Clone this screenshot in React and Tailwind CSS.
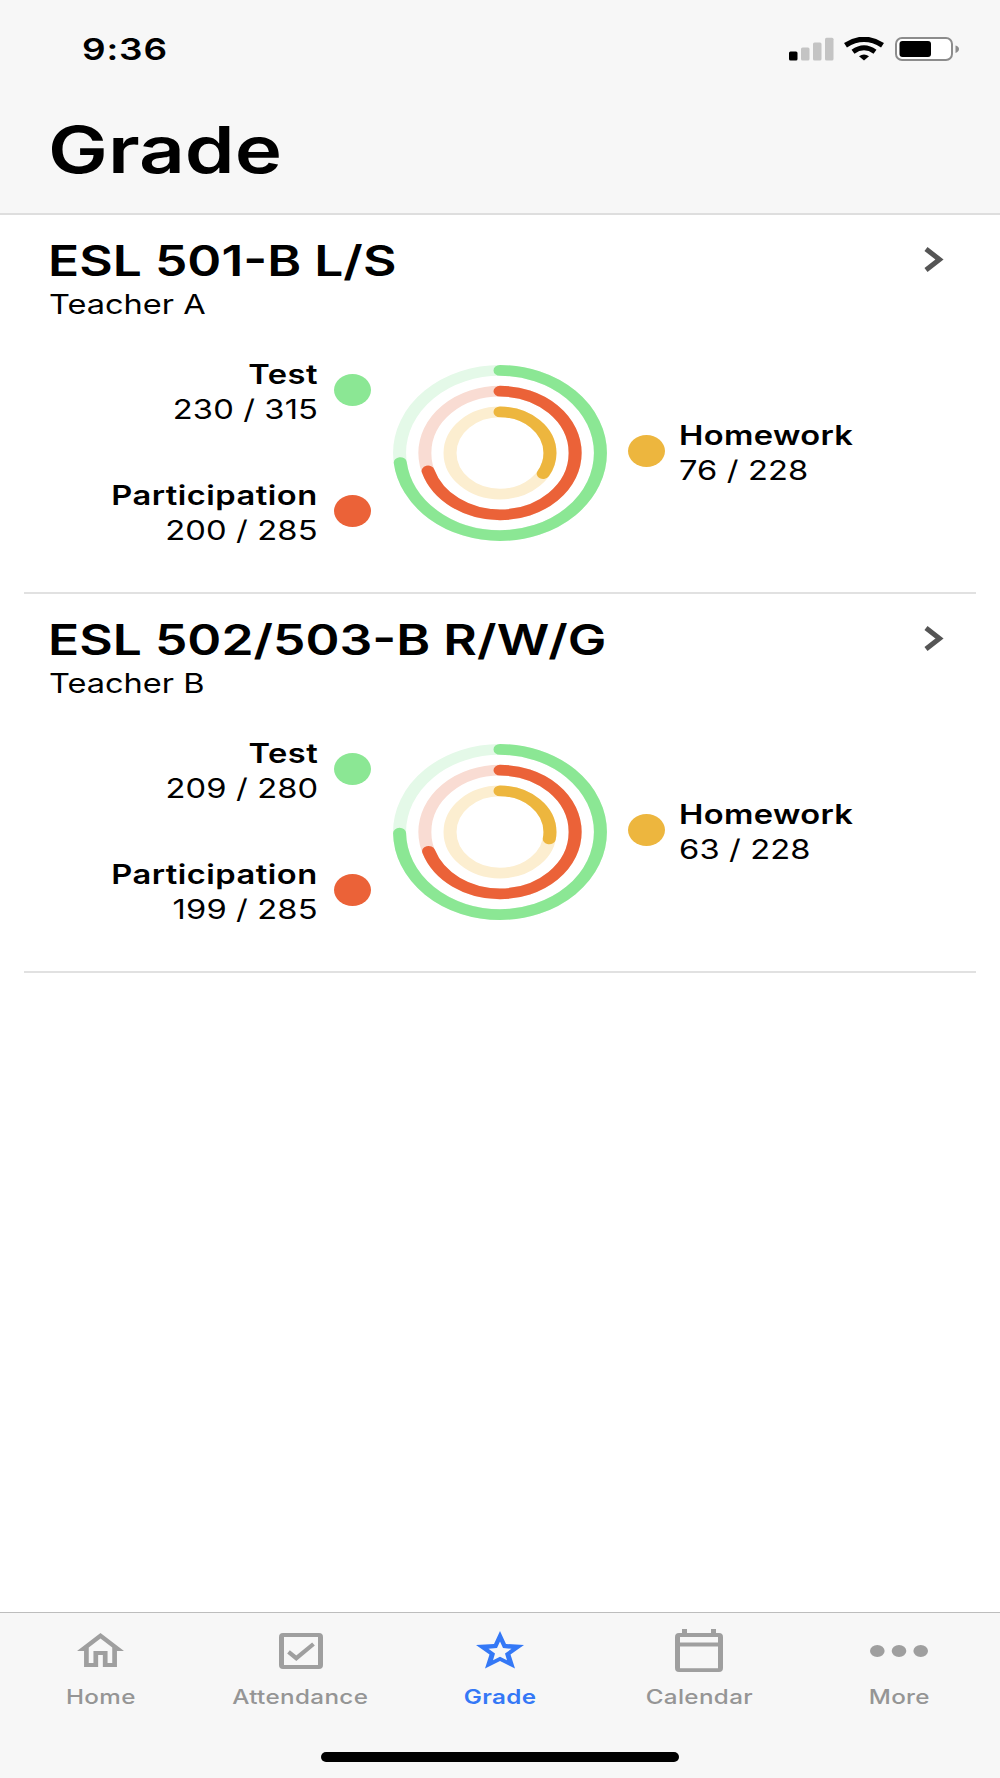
import React from 'react';

const courses = [
  {
    name: 'ESL 501-B L/S',
    teacher: 'Teacher A',
    test: [230, 315],
    participation: [200, 285],
    homework: [76, 228],
  },
  {
    name: 'ESL 502/503-B R/W/G',
    teacher: 'Teacher B',
    test: [209, 280],
    participation: [199, 285],
    homework: [63, 228],
  },
];

const tabs = [
  { label: 'Home', Icon: HomeIcon },
  { label: 'Attendance', Icon: AttendanceIcon },
  { label: 'Grade', Icon: StarIcon, active: true },
  { label: 'Calendar', Icon: CalendarIcon },
  { label: 'More', Icon: MoreIcon },
];

function HomeIcon() {
  return (
    <svg className="mb-[2px] h-[34px] w-[47px]" viewBox="2 3 20 17" preserveAspectRatio="none" fill="currentColor">
      <path d="M12 5.69l5 4.5V18h-2v-6H9v6H7v-7.81l5-4.5M12 3L2 12h3v8h6v-6h2v6h6v-8h3L12 3z" />
    </svg>
  );
}

function AttendanceIcon() {
  return (
    <svg className="ml-[2px] h-9 w-11" viewBox="0 0 44 36" fill="none" stroke="currentColor">
      <path d="M4 0H40Q44 0 44 4V32Q44 36 40 36H4Q0 36 0 32V4Q0 0 4 0ZM5 4V32H39V4Z" fill="currentColor" fillRule="evenodd" stroke="none" />
      <path d="M9.5 18.8L17.3 25.2L34.5 11" strokeWidth="4.2" />
    </svg>
  );
}

function StarIcon() {
  return (
    <svg className="mb-px h-[38px] w-12" viewBox="0 0 48 38" fill="currentColor">
      <path
        fillRule="evenodd"
        d="M24 0L30 13L48 14L34.5 23.5L39 37.5L24 30L9 37.5L13.5 23.5L0 14L18 13ZM24 10.5L21 17L12.5 17.8L19 22.5L17 29.3L24 25.7L31 29.3L29 22.5L35.5 17.8L27 17Z"
      />
    </svg>
  );
}

function CalendarIcon() {
  return (
    <svg className="mr-[2px] h-[43px] w-12" viewBox="0 0 48 43" fill="currentColor">
      <path fillRule="evenodd" d="M4 4H7V0H12V4H36V0H41V4H44Q48 4 48 8V39Q48 43 44 43H4Q0 43 0 39V8Q0 4 4 4ZM5 8V13.5H43V8ZM5 17.5V39.3H43V17.5Z" />
    </svg>
  );
}

function MoreIcon() {
  return (
    <svg className="h-3 w-[58px]" viewBox="0 0 58 12" fill="currentColor">
      <ellipse cx="7.3" cy="6" rx="7.3" ry="6" />
      <ellipse cx="29" cy="6" rx="7.3" ry="6" />
      <ellipse cx="50.7" cy="6" rx="7.3" ry="6" />
    </svg>
  );
}

function StatusBar() {
  return (
    <div className="flex h-[98px] items-start justify-between pl-[82px] pr-[40px] pt-[31px]">
      <span className="origin-left scale-x-[1.23] text-[30px] font-semibold leading-9 tracking-[0.7px]">9:36</span>
      <div className="flex items-center pt-[6px]">
        <svg className="h-6 w-[45px]" viewBox="0 0 45 24">
          <rect x="0" y="14.5" width="8.5" height="9" rx="1.5" />
          <rect x="12" y="10.5" width="8.5" height="13" rx="1.5" fill="#c4c4c4" />
          <rect x="24" y="5.5" width="8.5" height="18" rx="1.5" fill="#c4c4c4" />
          <rect x="36" y="0.7" width="8.5" height="22.8" rx="1.5" fill="#c4c4c4" />
        </svg>
        <svg className="ml-[10px] h-6 w-10" viewBox="0 0 40 24" fill="none" stroke="#000">
          <path d="M1.5 8.3Q20 -3.6 38.5 8.3" strokeWidth="5.4" />
          <path d="M9 14.8Q20 6.8 31 14.8" strokeWidth="5" />
          <path d="M15 19.2Q20 16 25 19.2L20 23.5Z" fill="#000" stroke="none" />
        </svg>
        <svg className="ml-[11px] h-6 w-[65px]" viewBox="0 0 65 24">
          <rect x="1" y="1" width="56" height="22" rx="6" fill="#fff" stroke="#8c8c8c" strokeWidth="2" />
          <rect x="4.5" y="4" width="31.5" height="16" rx="3" />
          <path d="M60.5 8.5Q64 9.5 64 12T60.5 16Z" fill="#8c8c8c" />
        </svg>
      </div>
    </div>
  );
}

function Ring({ radius, value, color, track }) {
  const length = 2 * Math.PI * radius;
  const [score, total] = value;
  return (
    <>
      <circle r={radius} stroke={track} />
      <circle
        r={radius}
        stroke={color}
        strokeLinecap="round"
        strokeDasharray={`${(length * score) / total} ${length}`}
        transform="rotate(-90)"
      />
    </>
  );
}

function Score({ label, value, dot, right }) {
  return (
    <div className={`flex items-center ${right ? '' : 'flex-row-reverse'}`}>
      <span className={`mb-1 h-8 w-[37px] rounded-[50%] ${dot}`} />
      <div
        className={`scale-x-[1.21] text-[27px] leading-[35px] ${
          right ? 'ml-[14px] origin-left' : 'mr-4 origin-right text-right'
        }`}
      >
        <p className={`font-semibold ${right ? 'tracking-[0.3px]' : 'tracking-[0.4px]'}`}>{label}</p>
        <p className="tracking-[0.1px]">{value.join(' / ')}</p>
      </div>
    </div>
  );
}

function CourseCard({ course }) {
  return (
    <section className="mx-6 h-[379px] border-b-2 border-[#e1e1e1] pt-[21px]">
      <div className="flex justify-between pl-6 pr-[32px]">
        <div>
          <h2 className="w-fit origin-left scale-x-[1.228] text-[42px] font-semibold leading-[50px]">{course.name}</h2>
          <p className="ml-px w-fit origin-left scale-x-[1.205] pt-[2px] text-[27px] leading-[34px]">{course.teacher}</p>
        </div>
        <svg className="mt-[11px] h-[25px] w-5" viewBox="0 0 20 25" fill="none" stroke="#555" strokeWidth="5">
          <path d="M2 2L15.5 12.5L2 23" />
        </svg>
      </div>
      <div className="mt-[35px] flex items-center">
        <div className="flex w-[347px] shrink-0 flex-col gap-[51px]">
          <Score label="Test" value={course.test} dot="bg-[#8be794]" />
          <Score label="Participation" value={course.participation} dot="bg-[#eb6238]" />
        </div>
        <svg
          className="ml-[22px] h-44 w-[214px] shrink-0"
          viewBox="-88 -88 176 176"
          preserveAspectRatio="none"
          fill="none"
          strokeWidth="10.7"
        >
          <Ring radius={82.6} value={course.test} color="#8be794" track="#e4f9e8" />
          <Ring radius={61.8} value={course.participation} color="#eb6238" track="#f9dcd3" />
          <Ring radius={41.1} value={course.homework} color="#edb63e" track="#fceed0" />
        </svg>
        <div className="ml-[21px]">
          <Score label="Homework" value={course.homework} dot="bg-[#edb63e]" right />
        </div>
      </div>
    </section>
  );
}

export default function App() {
  return (
    <div className="flex h-[1778px] w-[1000px] flex-col overflow-hidden bg-white font-['Inter',sans-serif] text-black">
      <header className="h-[215px] border-b-2 border-[#dedede] bg-[#f7f7f7]">
        <StatusBar />
        <h1 className="ml-[48px] w-fit origin-left scale-x-[1.23] text-[65px] font-semibold leading-[104px]">Grade</h1>
      </header>

      <main className="flex-1">
        {courses.map((course) => (
          <CourseCard key={course.name} course={course} />
        ))}
      </main>

      <footer className="flex h-[166px] flex-col items-center border-t border-[#bdbdbd] bg-[#f7f7f7]">
        <nav className="grid w-[998px] grid-cols-5">
          {tabs.map(({ label, Icon, active }) => (
            <div
              key={label}
              className={`flex flex-col items-center ${active ? 'text-[#3478f6]' : 'text-[#9f9f9f]'}`}
            >
              <div className="flex h-[75px] items-center">
                <Icon />
              </div>
              <span
                className={`scale-x-[1.21] text-[20px] leading-[19px] tracking-[0.3px] ${
                  active ? 'font-semibold' : 'font-medium text-[#959595]'
                }`}
              >
                {label}
              </span>
            </div>
          ))}
        </nav>
        <div className="mt-[45px] h-[10px] w-[358px] rounded-full bg-black" />
      </footer>
    </div>
  );
}
